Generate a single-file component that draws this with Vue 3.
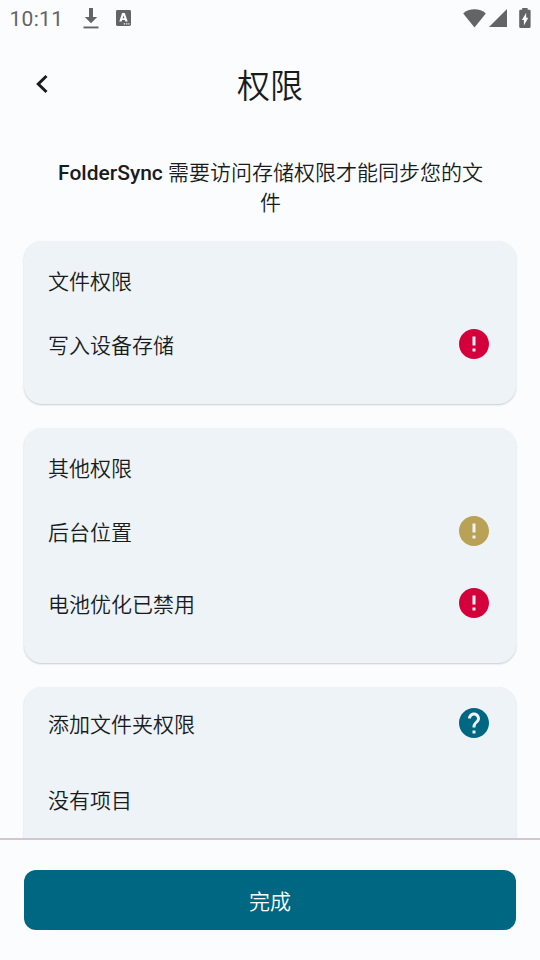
<script setup>
const groups = [
  {
    title: '文件权限',
    rows: [{ label: '写入设备存储', icon: 'error', tone: 'danger' }],
  },
  {
    title: '其他权限',
    rows: [
      { label: '后台位置', icon: 'error', tone: 'warning' },
      { label: '电池优化已禁用', icon: 'error', tone: 'danger' },
    ],
  },
]

const icons = {
  error:
    'M12 2C6.48 2 2 6.48 2 12s4.48 10 10 10 10-4.48 10-10S17.52 2 12 2zm1 15h-2v-2h2v2zm0-4h-2V7h2v6z',
  help: 'M12 2C6.48 2 2 6.48 2 12s4.48 10 10 10 10-4.48 10-10S17.52 2 12 2zm1 17h-2v-2h2v2zm2.07-7.75l-.9.92C13.45 12.9 13 13.5 13 15h-2v-.5c0-1.1.45-2.1 1.17-2.83l1.24-1.26c.37-.36.59-.86.59-1.41 0-1.1-.9-2-2-2s-2 .9-2 2H8c0-2.21 1.79-4 4-4s4 1.79 4 4c0 .88-.36 1.68-.93 2.25z',
}
</script>

<template>
  <div class="screen">
    <header class="status">
      <span class="clock">10:11</span>
      <svg class="download" width="16" height="21" viewBox="0 0 16 21">
        <path d="M6 0h4v9h4.2L8 15.2 1.8 9H6z" />
        <path d="M0.5 18.5h15v1.9h-15z" />
      </svg>
      <svg class="keyboard" width="15" height="16" viewBox="0 0 15 16">
        <rect width="15" height="16" rx="1.4" />
        <path class="cut" fill-rule="evenodd" d="M6.1 3h2.7l2.9 8.6H9.4l-.5-1.6H6.1l-.5 1.6H3.3zM7.5 5.4l-.9 2.9h1.8z" />
        <path class="cut" d="M7.8 13.3h1.3v1.2H7.8zM10.1 13.3h1.3v1.2h-1.3zM12.3 13.3h1.2v1.2h-1.2z" />
      </svg>
      <svg class="wifi" width="23" height="19" viewBox="0 0 23 19">
        <path d="M0.2 4.4C3.2 1.6 7 .2 11.5 .2S19.8 1.6 22.8 4.4L11.5 18.4z" />
      </svg>
      <svg class="signal" width="18" height="18" viewBox="0 0 18 18">
        <path d="M18 0v18H0z" />
      </svg>
      <svg class="battery" width="12" height="20" viewBox="0 0 12 20">
        <path d="M3.2 0h5.4v1.8h1.8c.7 0 1.2.5 1.2 1.2v15.7c0 .7-.5 1.2-1.2 1.2H1.4c-.7 0-1.2-.5-1.2-1.2V3c0-.7.5-1.2 1.2-1.2h1.8z" />
        <path class="cut" d="M7.2 4.8v5h2.1l-4.4 7.6v-5.5H2.9z" />
      </svg>
    </header>

    <div class="topbar">
      <svg class="back" width="12" height="20" viewBox="0 0 12 20">
        <path d="M10.5 2L2.3 10l8.2 8" />
      </svg>
      <h1>权限</h1>
    </div>

    <main>
      <p class="intro"><b>FolderSync</b> 需要访问存储权限才能同步您的文件</p>

      <section v-for="group in groups" :key="group.title" class="card">
        <h2>{{ group.title }}</h2>
        <div v-for="row in group.rows" :key="row.label" class="row">
          <span>{{ row.label }}</span>
          <svg :class="['mark', row.tone]" viewBox="0 0 24 24"><path :d="icons[row.icon]" /></svg>
        </div>
      </section>

      <section class="card folders">
        <div class="row">
          <span>添加文件夹权限</span>
          <svg class="mark info" viewBox="0 0 24 24"><path :d="icons.help" /></svg>
        </div>
        <div class="empty">没有项目</div>
      </section>
    </main>

    <footer>
      <button type="button">完成</button>
    </footer>
  </div>
</template>

<style>
body {
  margin: 0;
  overflow: hidden;
}
</style>

<style scoped>
.screen {
  width: 540px;
  height: 960px;
  display: flex;
  flex-direction: column;
  overflow: hidden;
  background: #fbfcfe;
  color: #191c1e;
  font-family: Roboto, "Noto Sans CJK SC", sans-serif;
  font-size: 21px;
  font-weight: 350;
  line-height: 30px;
}
svg {
  display: block;
  flex: none;
}
.status {
  height: 36px;
  flex: none;
  display: flex;
  align-items: center;
  box-sizing: border-box;
  padding: 0 9.5px;
  color: #636466;
  fill: #636466;
}
.cut {
  fill: #fbfcfe;
}
.clock {
  width: 73px;
  font-weight: 400;
  letter-spacing: 0.3px;
  padding-top: 2px;
}
.keyboard {
  margin-left: 17.5px;
}
.wifi {
  margin-left: auto;
  margin-right: 3.5px;
}
.signal {
  margin-right: 11.5px;
}
.topbar {
  height: 96px;
  flex: none;
  display: grid;
  grid-template-columns: 60px 1fr 60px;
  align-items: center;
}
.back {
  margin-left: 35.7px;
  fill: none;
  stroke: #191c1e;
  stroke-width: 3;
}
h1 {
  margin: 0;
  padding-top: 6px;
  text-align: center;
  font-size: 33px;
  line-height: 48px;
  font-weight: inherit;
}
main {
  flex: 1;
  min-height: 0;
  overflow: hidden;
  padding: 26px 24px 0;
}
.intro {
  margin: 0 23px 22.6px 24px;
  text-align: center;
}
.intro b {
  font-weight: 500;
}
.card {
  box-sizing: border-box;
  margin-bottom: 24px;
  padding: 25.4px 24px 23.8px;
  border-radius: 18px;
  background: #eef3f7;
  box-shadow: 0 1px 2px rgba(0, 0, 0, 0.2);
}
h2 {
  margin: 0 0 11px;
  padding-top: 1px;
  font-size: 21px;
  line-height: 30px;
  font-weight: inherit;
}
.row {
  height: 72px;
  display: flex;
  align-items: center;
  justify-content: space-between;
}
.row span {
  padding-top: 4px;
}
.mark {
  width: 36px;
  height: 36px;
}
.danger {
  fill: #d3003b;
}
.warning {
  fill: #b9a156;
}
.info {
  fill: #006782;
}
.folders {
  height: 220px;
  padding-top: 0;
}
.empty {
  padding-top: 27px;
}
footer {
  height: 122px;
  flex: none;
  box-sizing: border-box;
  border-top: 2px solid #cfc8d2;
  padding: 30px 24px;
}
button {
  display: block;
  width: 100%;
  height: 60px;
  padding: 4px 0 0;
  border: 0;
  border-radius: 12px;
  background: #006782;
  color: #fff;
  font: inherit;
}
</style>
